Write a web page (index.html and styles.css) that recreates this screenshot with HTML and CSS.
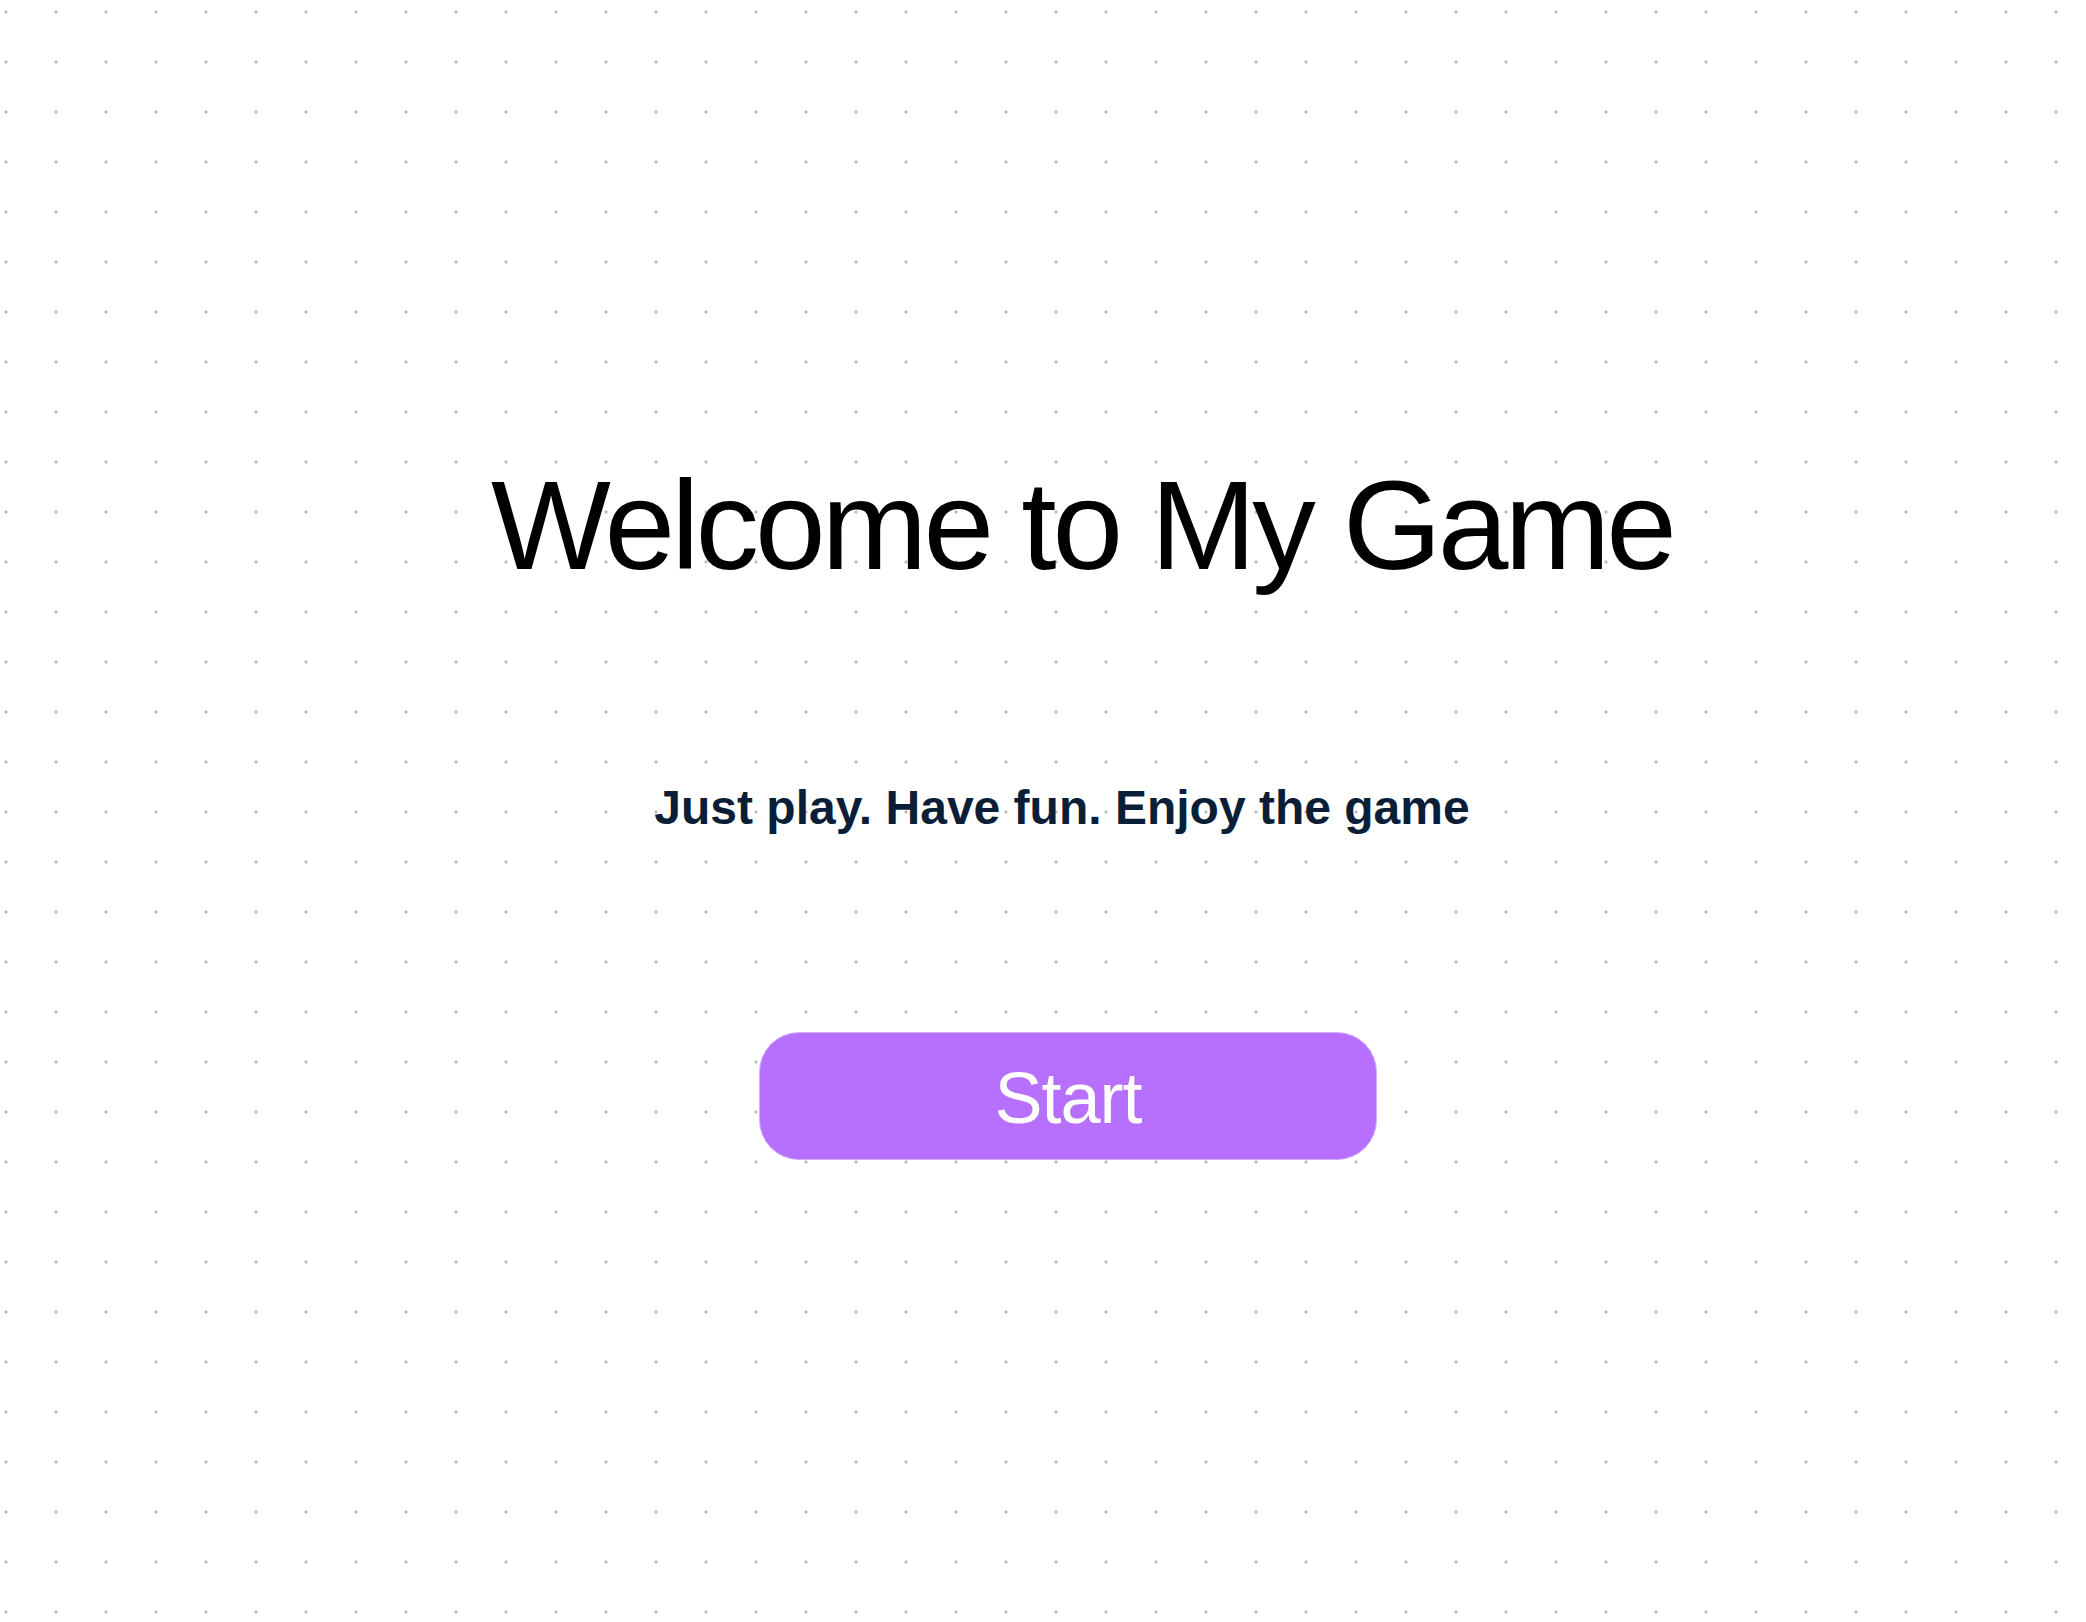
FILE: index.html
```html
<!DOCTYPE html>
<html lang="en">
<head>
<meta charset="utf-8">
<title>Welcome to My Game</title>
<link rel="stylesheet" href="styles.css">
</head>
<body>
<main class="screen">
  <h1 class="title">Welcome to My Game</h1>
  <p class="tagline">Just play. Have fun. Enjoy the game</p>
  <button class="start-btn" type="button">Start</button>
</main>
</body>
</html>
```
FILE: styles.css
```css
html, body {
  margin: 0;
  padding: 0;
}
body {
  min-height: 100vh;
  background-color: #ffffff;
  background-image: radial-gradient(circle at 6px 12px, #b9b9b9 1.2px, rgba(185,185,185,0) 1.9px);
  background-size: 50px 50px;
  font-family: "Liberation Sans", Arial, Helvetica, sans-serif;
}
.screen {
  display: flex;
  flex-direction: column;
  align-items: center;
  padding-top: 462px;
}
.title {
  margin: 0 0 0 78px;
  font-size: 127px;
  line-height: 1;
  font-weight: 400;
  letter-spacing: -4px;
  color: #000000;
}
.tagline {
  margin: 195px 0 0 38px;
  font-size: 48px;
  line-height: 1;
  font-weight: 700;
  color: #0b1e37;
}
.start-btn {
  margin: 200px 0 0 50px;
  width: 618px;
  height: 128px;
  box-sizing: border-box;
  display: flex;
  align-items: center;
  justify-content: center;
  padding: 3px 0 0 0;
  border: 1.5px solid #d3aefc;
  border-radius: 40px;
  background: #b770fd;
  color: #ffffff;
  font-family: "Liberation Sans", Arial, Helvetica, sans-serif;
  font-size: 72px;
  line-height: 1;
  font-weight: 400;
  letter-spacing: -1px;
  cursor: pointer;
}
```
